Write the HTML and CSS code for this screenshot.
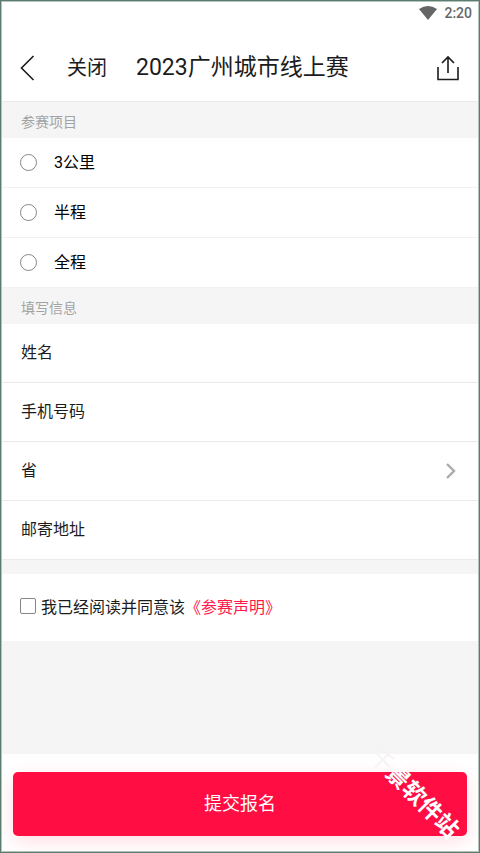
FILE: index.html
```html
<!DOCTYPE html>
<html lang="zh-CN">
<head>
<meta charset="utf-8">
<meta name="viewport" content="width=device-width, initial-scale=1">
<title>2023广州城市线上赛</title>
<link rel="stylesheet" href="styles.css">
</head>
<body>
<form class="screen">
  <div class="status">
    <svg class="wifi" viewBox="0 0 18 14" aria-hidden="true"><path d="M0 3Q9-3 18 3L9 14Z"/></svg>
    <span>2:20</span>
  </div>
  <header class="navbar">
    <button type="button" class="icon-button back" aria-label="返回">
      <svg class="icon-back" viewBox="0 0 16 26" aria-hidden="true"><path d="M13.5 1L1.5 13L13.5 25"/></svg>
    </button>
    <button type="button" class="close">关闭</button>
    <h1 class="title">2023广州城市线上赛</h1>
    <button type="button" class="icon-button" aria-label="分享">
      <svg class="icon-share" viewBox="0 0 22 26" aria-hidden="true"><path d="M1 12V24.5H21V12M11 18V2M5 8L11 2L17 8"/></svg>
    </button>
  </header>
  <main class="content">
    <h2 class="section">参赛项目</h2>
    <div class="options">
      <label class="option"><input class="radio" type="radio" name="event"><span>3公里</span></label>
      <label class="option"><input class="radio" type="radio" name="event"><span>半程</span></label>
      <label class="option"><input class="radio" type="radio" name="event"><span>全程</span></label>
    </div>
    <h2 class="section">填写信息</h2>
    <div class="fields">
      <div class="field"><label for="name">姓名</label><input class="entry" id="name" type="text"></div>
      <div class="field"><label for="phone">手机号码</label><input class="entry" id="phone" type="tel"></div>
      <div class="field">
        <label for="province">省</label>
        <select class="entry" id="province"><option value=""></option></select>
        <svg class="chevron" viewBox="0 0 10 16" aria-hidden="true"><path d="M1 1L8 8L1 15"/></svg>
      </div>
      <div class="field"><label for="address">邮寄地址</label><input class="entry" id="address" type="text"></div>
    </div>
    <div class="agreement">
      <input class="checkbox" id="agree" type="checkbox">
      <label for="agree">我已经阅读并同意该</label><a class="terms" href="#">《参赛声明》</a>
    </div>
  </main>
  <footer class="footer">
    <button type="submit" class="submit">提交报名</button>
    <span class="watermark"><span class="faint">千</span>景软件站</span>
  </footer>
</form>
</body>
</html>
```
FILE: styles.css
```css
* {
  box-sizing: border-box;
}

body {
  margin: 0;
  background: #f5f5f5;
  color: #1c1c1c;
  font: 16px/24px Roboto, "Noto Sans CJK SC", sans-serif;
}

button,
input,
select {
  margin: 0;
  padding: 0;
  border: 0;
  background: none;
  color: inherit;
  font: inherit;
}

svg {
  display: block;
  fill: none;
  stroke: currentColor;
}

.screen {
  display: flex;
  flex-direction: column;
  min-height: 100vh;
  border: 1px solid #5c7c70;
  padding: 1px;
  background: #f5f5f5;
  box-shadow: inset 0 0 0 1px #b3c4bd;
  overflow: hidden;
}

.status {
  display: flex;
  align-items: center;
  justify-content: flex-end;
  gap: 7px;
  height: 22px;
  padding-right: 6px;
  background: #fff;
  color: #666;
  font-size: 14px;
  font-weight: 500;
}

.wifi {
  width: 18px;
  height: 14px;
  fill: currentColor;
  stroke: none;
}

.navbar {
  display: flex;
  align-items: center;
  height: 78px;
  padding: 10px 19px 0 18px;
  border-bottom: 1px solid #ebebeb;
  background: #fff;
}

.icon-back {
  width: 16px;
  height: 26px;
  stroke-width: 1.6;
}

.back {
  margin-right: 31px;
}

.close {
  margin-right: 29px;
  font-size: 20px;
}

.title {
  flex: 1;
  margin: 0;
  font-size: 23px;
  font-weight: 400;
  line-height: 32px;
}

.icon-share {
  width: 22px;
  height: 26px;
  stroke-width: 1.6;
}

.content {
  flex: 1;
}

.section {
  margin: 0;
  padding: 8px 19px 4px;
  color: #a3a3a3;
  font-size: 14px;
  font-weight: 400;
}

.options,
.fields {
  background: #fff;
}

.option {
  display: flex;
  align-items: center;
  gap: 17px;
  height: 50px;
  padding: 0 18px;
  border-bottom: 1px solid #f1f1f1;
  color: #000;
}

.radio,
.checkbox {
  flex: none;
  width: 16px;
  height: 16px;
  appearance: none;
  border: 1px solid #858585;
  background: #fff;
}

.radio {
  width: 17px;
  height: 17px;
  border-radius: 50%;
}

.radio:checked {
  border: 5px solid #ff0d43;
}

.checkbox {
  margin: 0 5px 4px 0;
  border-radius: 2px;
}

.checkbox:checked {
  background: #ff0d43;
}

.field {
  display: flex;
  align-items: center;
  gap: 16px;
  padding: 17px 22px 17px 19px;
  border-bottom: 1px solid #ebebeb;
}

.entry {
  flex: 1;
  min-width: 0;
  height: 24px;
  appearance: none;
  outline: 0;
}

.chevron {
  width: 10px;
  height: 16px;
  color: #aaa;
  stroke-width: 2.4;
}

.agreement {
  display: flex;
  align-items: center;
  height: 67px;
  margin-top: 14px;
  padding: 0 18px;
  background: #fff;
}

.terms {
  color: #ff1749;
  text-decoration: none;
}

.footer {
  position: relative;
  padding: 18px 11px 15px;
  background: #fff;
}

.submit {
  display: block;
  width: 100%;
  height: 64px;
  border-radius: 5px;
  background: #ff0d43;
  box-shadow: 0 5px 18px rgb(255 13 67 / 14%);
  color: #fff;
  font-size: 18px;
}

.watermark {
  position: absolute;
  right: 7px;
  bottom: 45px;
  color: #fff;
  font-size: 23px;
  font-weight: 700;
  line-height: 24px;
  white-space: nowrap;
  transform: rotate(45deg);
  pointer-events: none;
}

.faint {
  color: #f8f3f3;
  font-weight: 400;
}
```
